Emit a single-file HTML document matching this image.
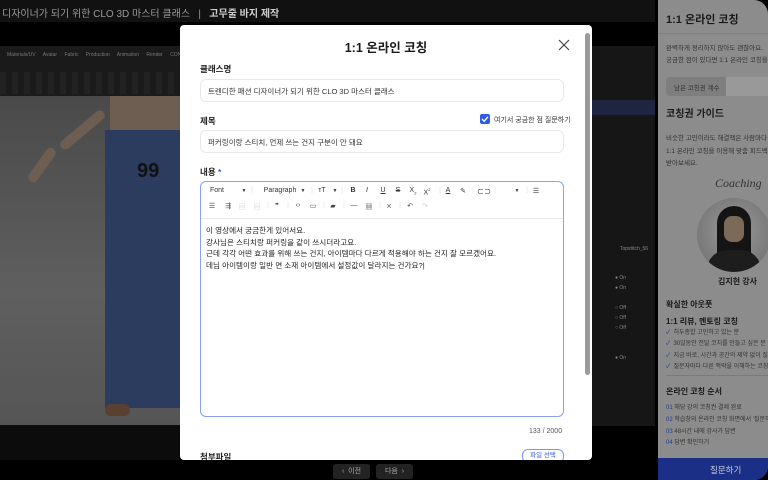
<!DOCTYPE html><html><head><meta charset="utf-8"><style>
*{margin:0;padding:0;box-sizing:border-box}
body{width:768px;height:480px;overflow:hidden;background:#000;font-family:"Liberation Sans","Noto Sans CJK KR",sans-serif;position:relative}
.a{position:absolute}
.t{white-space:nowrap}
.tb span{position:absolute;white-space:nowrap;transform:translateX(-50%)}
.tb .s{color:#ddd}
</style></head><body>
<!-- background app -->
<div class="a" style="left:0;top:0;width:660px;height:22px;background:#111"></div>
<div class="a t" style="left:2px;top:5px;font-size:10px;color:#9a9a9a">디자이너가 되기 위한 CLO 3D 마스터 클래스 &nbsp;&nbsp;|&nbsp;&nbsp; <span style="color:#ccc;font-weight:bold">고무줄 바지 제작</span></div>
<div class="a" style="left:0;top:46px;width:660px;height:50px;background:#1a1a1a"></div>
<div class="a t" style="left:7px;top:52px;font-size:5px;color:#777;word-spacing:6px">Materials/UV Avatar Fabric Production Animation Render CONN</div>
<div class="a" style="left:0;top:72px;width:660px;height:22px;background:repeating-linear-gradient(90deg,#2a2a2a 0 6px,#1a1a1a 6px 12px);opacity:.5"></div>
<div class="a" style="left:0;top:96px;width:180px;height:329px;background:linear-gradient(#4a4a4a,#5f5f5f 60%,#555)"></div>
<div class="a" style="left:0;top:425px;width:180px;height:35px;background:#0c0c0c"></div>
<div class="a" style="left:110px;top:96px;width:70px;height:35px;background:#6e5e52"></div>
<div class="a" style="left:55px;top:125px;width:55px;height:10px;background:#6e5e52;transform:rotate(-40deg);border-radius:5px"></div>
<div class="a" style="left:22px;top:160px;width:40px;height:10px;background:#6e5e52;transform:rotate(-55deg);border-radius:5px"></div>
<div class="a" style="left:105px;top:130px;width:75px;height:278px;background:#2b3c5e"></div>
<div class="a t" style="left:137px;top:160px;font-size:20px;font-weight:bold;color:#111">99</div>
<div class="a" style="left:105px;top:404px;width:25px;height:12px;background:#5a4030;border-radius:6px"></div>
<!-- right app strip -->
<div class="a" style="left:592px;top:46px;width:66px;height:380px;background:#161616"></div>
<div class="a" style="left:592px;top:100px;width:66px;height:15px;background:#1d2540"></div>
<div class="a t" style="left:620px;top:246px;font-size:5px;color:#888">Topstitch_56</div>
<div class="a t" style="left:615px;top:273px;font-size:5px;color:#888;line-height:10px">● On<br>● On<br><br>○ Off<br>○ Off<br>○ Off<br><br><br>● On</div>
<!-- right panel -->
<div class="a" style="left:658px;top:0;width:110px;height:480px;background:#8c8c8c;border-radius:0 14px 14px 0;overflow:hidden;color:#1a1a1a">
<div class="a t" style="left:8px;top:11px;font-size:11px;font-weight:bold">1:1 온라인 코칭</div>
<div class="a" style="left:0;top:33px;width:110px;height:1px;background:#808080"></div>
<div class="a t" style="left:8px;top:43px;font-size:6.5px;color:#333;line-height:12px">완벽하게 정리하지 않아도 괜찮아요.<br>궁금한 점이 있다면 1:1 온라인 코칭을</div>
<div class="a" style="left:8px;top:77px;width:110px;height:19px;background:#999;border-radius:4px"></div>
<div class="a" style="left:8px;top:77px;width:60px;height:19px;background:#7e7e7e;border-radius:4px 0 0 4px"></div>
<div class="a t" style="left:16px;top:82px;font-size:6.5px;color:#333">남은 코칭권 계수</div>
<div class="a t" style="left:8px;top:105px;font-size:10px;font-weight:bold">코칭권 가이드</div>
<div class="a t" style="left:8px;top:133px;font-size:6.5px;color:#333;line-height:12.5px">비슷한 고민이라도 해결책은 사람마다<br>1:1 온라인 코칭을 이용해 맞춤 피드백을<br>받아보세요.</div>
<div class="a t" style="left:57px;top:176px;font-size:12px;font-style:italic;font-family:'Liberation Serif',serif;color:#333">Coaching</div>
<div class="a" style="left:39px;top:198px;width:74px;height:74px;border-radius:50%;background:radial-gradient(circle at 50% 45%,#9a9a9a,#6a6a6a);overflow:hidden">
<div class="a" style="left:20px;top:8px;width:34px;height:60px;background:#141414;border-radius:17px 17px 4px 4px"></div>
<div class="a" style="left:27px;top:18px;width:20px;height:26px;background:#7b6a58;border-radius:8px"></div>
<div class="a" style="left:10px;top:52px;width:54px;height:30px;background:#1d1d1d;border-radius:20px 20px 0 0"></div></div>
<div class="a t" style="left:60px;top:276px;font-size:8px;font-weight:bold">김지현 강사</div>
<div class="a t" style="left:8px;top:299px;font-size:8px;font-weight:bold">확실한 아웃풋</div>
<div class="a t" style="left:8px;top:316px;font-size:8px;font-weight:bold">1:1 리뷰, 멘토링 코칭</div>
<div class="a t" style="left:8px;top:328px;font-size:6px;color:#333;line-height:11.3px"><span style="color:#1e3a9a">✓</span>&nbsp; 허두종합 고민하고 있는 분<br><span style="color:#1e3a9a">✓</span>&nbsp; 30일동안 전달 코치를 만들고 싶은 분<br><span style="color:#1e3a9a">✓</span>&nbsp; 지금 바로, 시간과 공간의 제약 없이 질문<br><span style="color:#1e3a9a">✓</span>&nbsp; 질문자마다 다른 맥락을 이해하는 코칭</div>
<div class="a" style="left:8px;top:375px;width:110px;height:1px;background:#7a7a7a"></div>
<div class="a t" style="left:8px;top:386px;font-size:8px;font-weight:bold">온라인 코칭 순서</div>
<div class="a t" style="left:8px;top:403px;font-size:6px;color:#333;line-height:11.8px"><span style="color:#1e3a9a">01</span> 해당 강의 코칭권 결제 완료<br><span style="color:#1e3a9a">02</span> 학습창의 온라인 코칭 화면에서 '질문하기<br><span style="color:#1e3a9a">03</span> 48시간 내에 강사가 답변<br><span style="color:#1e3a9a">04</span> 답변 확인하기</div>
<div class="a" style="left:0;top:458px;width:110px;height:22px;background:#1c2f86"></div>
<div class="a t" style="left:52px;top:464px;font-size:8.5px;color:#c8cce0">질문하기</div>
</div>
<div class="a" style="left:655px;top:0;width:3px;height:480px;background:#000"></div>
<!-- bottom nav -->
<div class="a" style="left:333px;top:464px;width:37px;height:15px;background:#232323;border-radius:3px;color:#aaa;font-size:7px;text-align:center;line-height:15px">‹ &nbsp;이전</div>
<div class="a" style="left:376px;top:464px;width:37px;height:15px;background:#232323;border-radius:3px;color:#aaa;font-size:7px;text-align:center;line-height:15px">다음 &nbsp;›</div>
<!-- modal -->
<div class="a" style="left:180px;top:25px;width:412px;height:435px;background:#fff;border-radius:4px;overflow:hidden;color:#222">
<div class="a t" style="left:0;width:412px;text-align:center;top:12px;font-size:12.5px;font-weight:bold;color:#1a1a1a">1:1 온라인 코칭</div>
<div class="a" style="left:378px;top:13px;width:12px;height:12px"><svg width="12" height="12"><path d="M1 1L11 11M11 1L1 11" stroke="#444" stroke-width="1.2"/></svg></div>
<div class="a t" style="left:20px;top:38px;font-size:8.5px;font-weight:bold">클래스명</div>
<div class="a" style="left:20px;top:54px;width:364px;height:23px;border:1px solid #e6e8ec;border-radius:6px"></div>
<div class="a t" style="left:28px;top:61px;font-size:7.5px;color:#333">트렌디한 패션 디자이너가 되기 위한 CLO 3D 마스터 클래스</div>
<div class="a t" style="left:20px;top:90px;font-size:8.5px;font-weight:bold">제목</div>
<div class="a" style="left:300px;top:89px;width:10px;height:10px;background:#2f5bea;border-radius:2px"><svg width="10" height="10" style="display:block"><path d="M2 5L4.2 7.2L8 2.8" stroke="#fff" stroke-width="1.4" fill="none"/></svg></div>
<div class="a t" style="left:314px;top:90px;font-size:7px;color:#333">여기서 궁금한 점 질문하기</div>
<div class="a" style="left:20px;top:105px;width:364px;height:23px;border:1px solid #e6e8ec;border-radius:6px"></div>
<div class="a t" style="left:28px;top:112px;font-size:7.5px;color:#333">퍼커링이랑 스티치, 언제 쓰는 건지 구분이 안 돼요</div>
<div class="a t" style="left:20px;top:141px;font-size:8.5px;font-weight:bold">내용 <span style="color:#2f5bea">*</span></div>
<div class="a" style="left:20px;top:156px;width:364px;height:236px;border:1px solid #8aa0f5;border-radius:6px"></div>
<div class="a" style="left:21px;top:193px;width:362px;height:1px;background:#e6e8ec"></div>
<div class="a tb" style="left:0;top:162px;font-size:7px;color:#333;width:412px">
<span style="left:37px">Font</span><span style="left:64px;font-size:5px;top:1px">▼</span><span class="s" style="left:72px">|</span>
<span style="left:100px">Paragraph</span><span style="left:123px;font-size:5px;top:1px">▼</span><span class="s" style="left:132px">|</span>
<span style="left:142px">тT</span><span style="left:155px;font-size:5px;top:1px">▼</span><span class="s" style="left:162px">|</span>
<span style="left:173px;font-weight:bold">B</span><span style="left:187px;font-style:italic">I</span><span style="left:203px;text-decoration:underline">U</span><span style="left:218px;text-decoration:line-through">S</span><span style="left:233px">X<sub style="font-size:4px">2</sub></span><span style="left:247px">X<sup style="font-size:4px">2</sup></span><span class="s" style="left:260px">|</span>
<span style="left:268px;text-decoration:underline">A</span><span style="left:283px">✎</span><span class="s" style="left:293px">|</span><span style="left:304px">⊂⊃</span><span class="s" style="left:315px">|</span><span style="left:337px;font-size:5px;top:1px">▼</span><span class="s" style="left:347px">|</span><span style="left:356px">☰</span>
</div>
<div class="a tb" style="left:0;top:177px;font-size:7px;color:#444;width:412px">
<span style="left:32px">☰</span><span style="left:48px">⇶</span><span style="left:62px;color:#ccc">▤</span><span style="left:77px;color:#ccc">▤</span><span class="s" style="left:88px">|</span><span style="left:97px">❞</span><span class="s" style="left:108px">|</span><span style="left:118px">‹›</span><span style="left:133px">▭</span><span class="s" style="left:144px">|</span><span style="left:153px">▰</span><span class="s" style="left:164px">|</span><span style="left:174px">—</span><span style="left:189px">▦</span><span class="s" style="left:200px">|</span><span style="left:209px">⨯</span><span class="s" style="left:220px">|</span><span style="left:230px">↶</span><span style="left:245px;color:#ccc">↷</span>
</div>
<div class="a t" style="left:26px;top:200px;font-size:7.6px;color:#222;line-height:11.7px">이 영상에서 궁금한게 있어서요.<br>강사님은 스티치랑 퍼커링을 같이 쓰시더라고요.<br>근데 각각 어떤 효과를 위해 쓰는 건지, 아이템마다 다르게 적용해야 하는 건지 잘 모르겠어요.<br>데님 아이템이랑 일반 면 소재 아이템에서 설정값이 달라지는 건가요?|</div>
<div class="a t" style="left:349px;top:403px;font-size:7px;color:#555">133 / 2000</div>
<div class="a t" style="left:20px;top:426px;font-size:8.5px;font-weight:bold">첨부파일</div>
<div class="a" style="left:342px;top:424px;width:42px;height:14px;border:1px solid #7b93f5;border-radius:6px;font-size:6.5px;color:#2f5bea;text-align:center;line-height:12px">파일 선택</div>
<div class="a" style="left:405px;top:8px;width:5px;height:342px;background:#9a9a9a;border-radius:3px"></div>
</div>
</body></html>
